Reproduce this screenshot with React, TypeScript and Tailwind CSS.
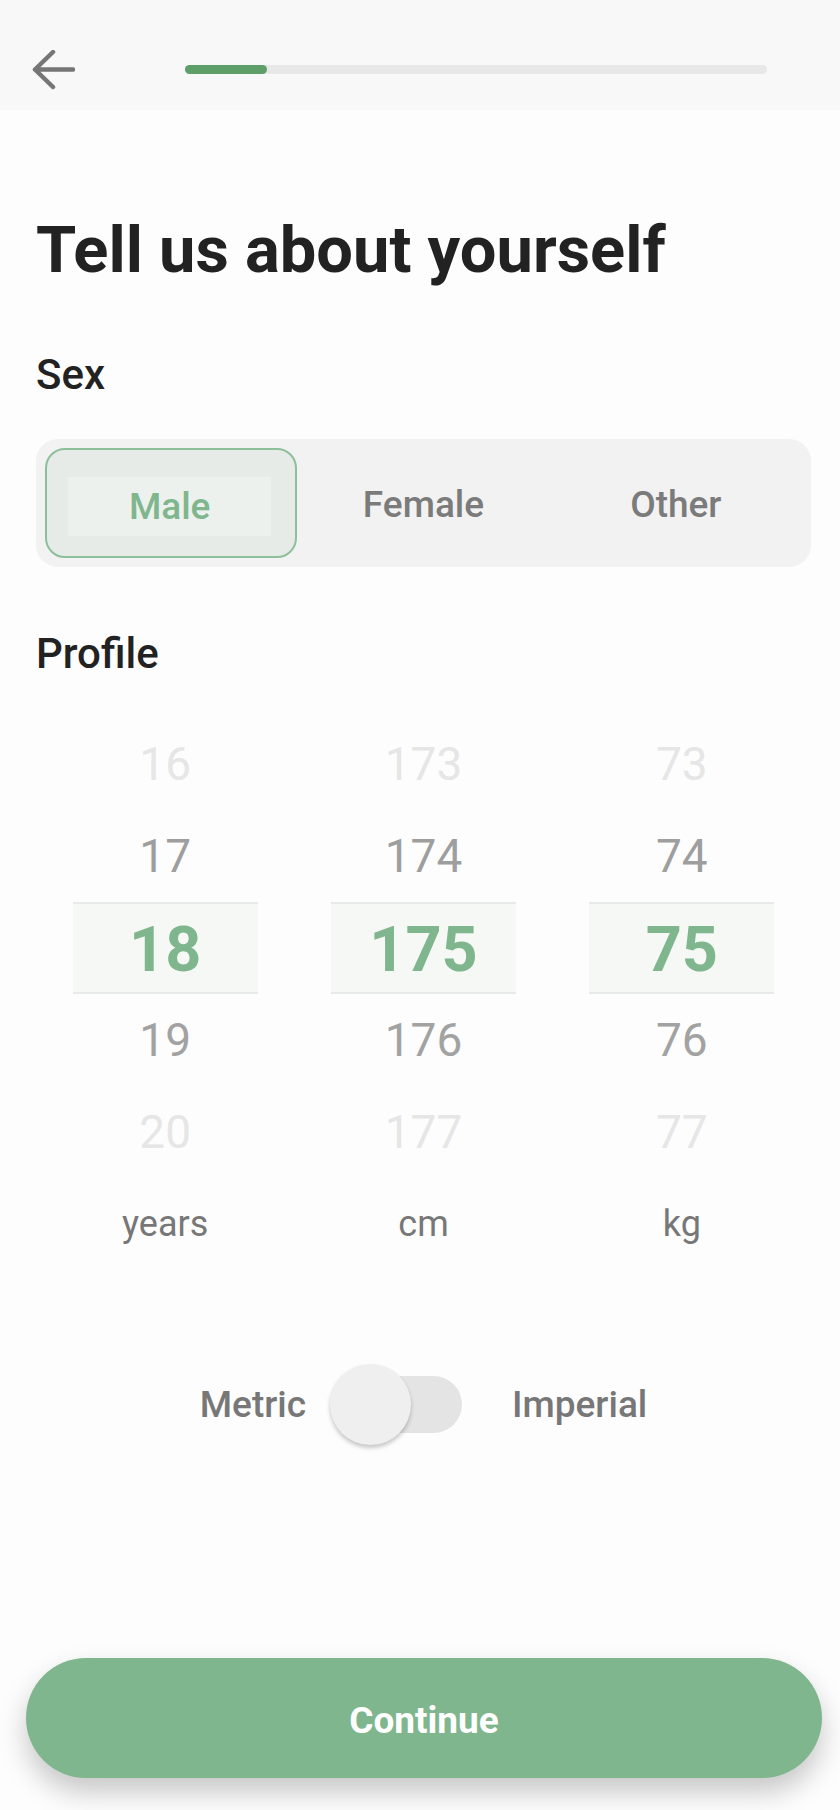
import React from "react";

const columns = [
  { values: ["16", "17", "18", "19", "20"], unit: "years" },
  { values: ["173", "174", "175", "176", "177"], unit: "cm" },
  { values: ["73", "74", "75", "76", "77"], unit: "kg" },
];

function PickerColumn({ values, unit }: { values: string[]; unit: string }) {
  return (
    <div className="flex flex-col items-center">
      <div className="flex h-[92px] w-full items-center justify-center text-[46px] text-[#e6e6e6]">{values[0]}</div>
      <div className="flex h-[92px] w-full items-center justify-center text-[46px] text-[#9e9e9e]">{values[1]}</div>
      <div className="flex h-[92px] w-[185px] items-center justify-center border-y-2 border-[#e6ebe7] bg-[#f5f8f5] pt-[4px] text-[63px] font-bold text-[#7fb68d]">
        {values[2]}
      </div>
      <div className="flex h-[92px] w-full items-center justify-center text-[46px] text-[#a2a2a2]">{values[3]}</div>
      <div className="flex h-[92px] w-full items-center justify-center text-[46px] text-[#e6e6e6]">{values[4]}</div>
      <div className="mt-[24px] text-[36px] leading-[44px] text-[#777777]">{unit}</div>
    </div>
  );
}

export default function App() {
  return (
    <div
      className="flex h-[1810px] w-[840px] flex-col overflow-hidden bg-[#fdfdfd]"
      style={{ fontFamily: "Roboto, 'Noto Sans', sans-serif" }}
    >
      {/* top bar */}
      <div className="flex h-[110px] items-center bg-[#f8f8f8] pl-[31px] pt-[29px]">
        <svg width="44" height="40" viewBox="0 0 44 40" fill="none">
          <path d="M22 2 L4 19.5 L22 37 M4 19.5 H42" stroke="#767676" strokeWidth="4.5" strokeLinecap="round" strokeLinejoin="round" />
        </svg>
        <div className="ml-[110px] h-[9px] w-[582px] rounded-full bg-[#e8e8e8]">
          <div className="h-full w-[82px] rounded-full bg-[#5e9e68]" />
        </div>
      </div>

      <div className="flex flex-col pl-[36px] pr-[29px]">
        <h1 className="mt-[104px] text-[65px] font-bold leading-[72px] text-[#222222]">Tell us about yourself</h1>

        <h2 className="mt-[65px] text-[42px] font-medium leading-[48px] text-[#222222]">Sex</h2>

        <div className="mt-[40px] grid h-[128px] grid-cols-3 rounded-[22px] bg-[#f2f2f2] p-[9px]">
          <button className="flex rounded-[20px] border-2 border-[#8dc09a] bg-[#e6ebe7] pt-[27px] pb-[20px] pl-[21px] pr-[24px]">
            <span className="flex flex-1 items-center justify-center bg-[#edf1ee] text-[37px] font-medium text-[#7fb68d]">Male</span>
          </button>
          <button className="flex items-center justify-center pt-[4px] text-[37px] font-medium text-[#7b7b7b]">Female</button>
          <button className="flex items-center justify-center pt-[4px] text-[37px] font-medium text-[#7b7b7b]">Other</button>
        </div>

        <h2 className="mt-[63px] text-[42px] font-medium leading-[48px] text-[#222222]">Profile</h2>

        <div className="mt-[40px] grid grid-cols-3">
          {columns.map((c) => (
            <PickerColumn key={c.unit} values={c.values} unit={c.unit} />
          ))}
        </div>

        {/* unit switch */}
        <div className="mt-[118px] flex items-center justify-center">
          <span className="text-[37px] font-medium text-[#777777]">Metric</span>
          <div className="relative ml-[24px] flex h-[81px] w-[132px] items-center justify-end">
            <div className="h-[57px] w-[112px] rounded-full bg-[#e4e4e4]" />
            <div className="absolute left-0 top-0 h-[81px] w-[81px] rounded-full bg-[#efefef] shadow-[0_3px_4px_rgba(0,0,0,0.22)]" />
          </div>
          <span className="ml-[50px] text-[37px] font-medium text-[#777777]">Imperial</span>
        </div>
      </div>

      <div className="mt-auto mb-[32px] pl-[26px] pr-[18px]">
        <button className="flex h-[120px] w-full items-center justify-center rounded-full bg-[#7fb68d] pt-[6px] text-[37px] font-bold text-white shadow-[0_14px_28px_rgba(0,0,0,0.22)]">
          Continue
        </button>
      </div>
    </div>
  );
}
